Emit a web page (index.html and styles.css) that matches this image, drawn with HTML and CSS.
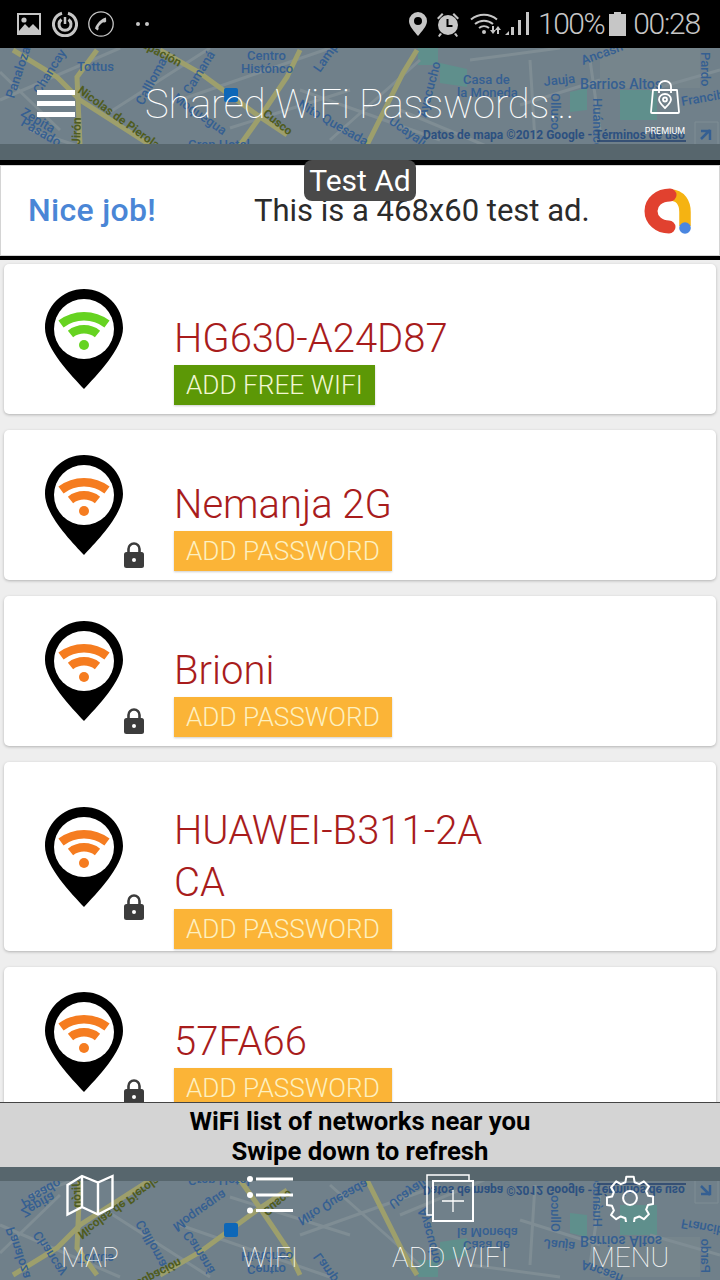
FILE: index.html
```html
<!DOCTYPE html>
<html lang="en">
<head>
<meta charset="utf-8">
<title>Shared WiFi Passwords</title>
<link rel="stylesheet" href="styles.css">
</head>
<body>
<svg class="defs" width="0" height="0" aria-hidden="true">
  <defs>
    <g id="pin-shape">
      <path d="M39 0C17.500 0 0 17.500 0 39C0 60 27 87 39 100C51 87 78 60 78 39C78 17.500 60.500 0 39 0z" fill="#000"/>
      <circle cx="39" cy="40" r="30" fill="#fff"/>
    </g>
    <g id="wifi-arcs" fill="none" stroke-width="8.500">
      <path d="M16 35A38 38 0 0 1 62 35"/>
      <path d="M25.500 45A22 22 0 0 1 52.500 45"/>
    </g>
    <symbol id="lock" viewBox="0 0 20 26">
      <path d="M4.500 11V7a5.500 5.500 0 0 1 11 0v4" fill="none" stroke="#3c3c3c" stroke-width="2.600"/>
      <rect x="0" y="10" width="20" height="16" rx="2.500" fill="#3c3c3c"/>
      <circle cx="10" cy="18" r="2" fill="#fff"/>
    </symbol>
  </defs>
</svg>

<div class="status">
  <div class="status-group">
    <svg class="s-icon" width="24" height="22" viewBox="0 0 24 22"><path fill-rule="evenodd" d="M0 0h24v22H0zM2 2v16l6-7 4 4 4-4 6 6V2z"/><circle cx="7" cy="7" r="2.600"/></svg>
    <svg class="s-icon s-gap" width="26" height="26" viewBox="0 0 26 26"><g fill="none" stroke-width="3"><path d="M16 2.200A11.500 11.500 0 1 1 10 2.200"/><path d="M9.500 8.500a6 6 0 1 0 7 0"/><path d="M13 6v7" stroke-width="2.500"/></g></svg>
    <svg class="s-icon s-gap2" width="26" height="26" viewBox="0 0 26 26"><circle cx="13" cy="13" r="12.200" fill="none" stroke-width="1.300"/><path d="M18 6.500c-4 .5-9.500 6-11 11l2.500 2c1.200-.8 1.300-2 .9-3.200 1-2 2.800-4 4.800-5 1.200.5 2.300.2 3-.8z"/></svg>
    <svg class="s-dots" width="16" height="6" viewBox="0 0 16 6"><circle cx="3" cy="3" r="2"/><circle cx="12" cy="3" r="2"/></svg>
  </div>
  <div class="status-group">
    <svg class="s-icon" width="18" height="24" viewBox="0 0 18 24"><path fill-rule="evenodd" d="M9 0a9 9 0 0 0-9 9c0 5 5 10 9 15 4-5 9-10 9-15a9 9 0 0 0-9-9zm0 5a4 4 0 1 1 0 8 4 4 0 0 1 0-8z"/></svg>
    <svg class="s-icon s-gap-alarm" width="24" height="26" viewBox="0 0 24 26"><circle cx="12" cy="14" r="10"/><path d="M1 7l5-5 1.500 1.500-5 5zM23 7l-5-5-1.500 1.500 5 5zM4 22l-2 3 1.500 1 2.500-3zM20 22l2 3-1.500 1-2.500-3z"/><path d="M11.500 8v7h5" fill="none" stroke="#000" stroke-width="2"/></svg>
    <svg class="s-icon s-gap-wifi" width="32" height="24" viewBox="0 0 32 24"><g fill="none" stroke-width="2"><path d="M1 7.500a20 20 0 0 1 26 0"/><path d="M5 12a14 14 0 0 1 18 0"/><path d="M9 16a8 8 0 0 1 10 0"/></g><circle cx="14" cy="20" r="2"/><path d="M21 16h2v4h2l-3 4-3-4h2zM28 24h-2v-4h-2l3-4 3 4h-2z" transform="translate(1 -2)"/></svg>
    <svg class="s-icon s-gap-signal" width="26" height="24" viewBox="0 0 26 24"><path d="M0 23l4-4v4zM6 23v-8h3v8zM13 23V8h3v15zM21 23V0h3v23z"/></svg>
    <span class="s-text s-pct">100%</span>
    <svg class="s-icon s-gap-bat" width="17" height="24" viewBox="0 0 17 24"><path d="M5 0h7v2h5v22H0V2h5z"/></svg>
    <span class="s-text s-time">00:28</span>
  </div>
</div>

<header class="header">
  <svg class="map" viewBox="0 48 720 112" preserveAspectRatio="none" aria-hidden="true">
    <g id="map">
      <rect x="0" y="40" width="720" height="130" fill="#70808a"/>
      <g class="m-green">
        <rect x="418" y="48" width="20" height="17"/><path d="M440 63l27 6v18l-27-4z"/>
        <rect x="620" y="90" width="37" height="30"/><path d="M570 92l17-4v22l-17 2z"/>
        <rect x="600" y="48" width="100" height="40" class="m-grey"/>
      </g>
      <g class="m-road">
        <path d="M0 100L120 48M110 112L210 48M30 130L120 160M180 100L330 48M230 128L350 90M330 140L420 60M400 110L520 160M470 60L560 48M520 105L600 80M530 60L535 140M590 60L600 130M650 90L720 70M300 90L440 140M0 72L60 130"/>
      </g>
      <g class="m-yellow">
        <path d="M13 50L57 77L80 100L150 145"/><path d="M97 50L77 77L80 145"/>
        <path d="M160 50L200 73L260 117L287 135"/><path d="M300 50L287 77L260 117L240 145"/>
        <path d="M417 50L403 73L367 145"/>
      </g>
      <g class="m-t">
        <text x="247" y="60">Centro</text>
        <text x="241" y="73">Histónco</text>
        <text x="77" y="71">Tottus</text>
        <text x="463" y="84">Casa de</text>
        <text x="457" y="97">la Moneda</text>
        <text x="544" y="86" transform="rotate(-6 544 86)">Jauja</text>
        <text x="580" y="89" class="m-lg">Barrios Altos</text>
        <text x="583" y="65" transform="rotate(-20 583 65)">Ancash</text>
        <text x="188" y="149">Gran Hotel</text>
        <text x="14" y="99" transform="rotate(-72 14 99)">Panaloza</text>
        <text x="40" y="95" transform="rotate(-58 40 95)">Chancay</text>
        <text x="190" y="95" transform="rotate(-58 190 95)">Camaná</text>
        <text x="143" y="106" transform="rotate(-62 143 106)">Callloma</text>
        <text x="172" y="100" transform="rotate(35 172 100)">Moquegua</text>
        <text x="297" y="107" transform="rotate(30 297 107)">Nito Quesada</text>
        <text x="20" y="115" transform="rotate(30 20 115)">Zepita</text>
        <text x="20" y="125" transform="rotate(30 20 125)">Pasado</text>
        <text x="426" y="118" transform="rotate(-75 426 118)">Ayacucho</text>
        <text x="388" y="123" transform="rotate(35 388 123)">Ucayali</text>
        <text x="551" y="93" transform="rotate(90 551 93)">Olluco</text>
        <text x="593" y="98" transform="rotate(90 593 98)">Huánuco</text>
        <text x="701" y="52" transform="rotate(90 701 52)">Pardo</text>
        <text x="682" y="106" transform="rotate(-10 682 106)">Francibia</text>
        <text x="320" y="73" transform="rotate(-55 320 73)">Lampa</text>
        <text x="423" y="139" class="m-credit">Datos de mapa ©2012 Google - Términos de uso</text>
      </g>
      <path d="M597 141H686" class="m-line"/>
      <path d="M695 122h23v25h-23z" class="m-box"/>
      <path d="M701 139l9-9M701 131h9v9" class="m-arrow"/>
      <g class="m-olive">
        <text x="128" y="40" transform="rotate(28 128 40)">Ocupación</text>
        <text x="77" y="92" transform="rotate(36 77 92)">Nicolas de Pierola</text>
        <text x="262" y="115" transform="rotate(38 262 115)">Cusco</text>
        <text x="80" y="145" transform="rotate(-88 80 145)">Jirón</text>
      </g>
      <rect x="224" y="88" width="14" height="14" rx="2" fill="#0d67b8"/>
      <rect x="0" y="144" width="720" height="24" fill="#57666d"/>
    </g>
  </svg>
  <div class="burger"><span></span><span></span><span></span></div>
  <h1 class="title">Shared WiFi Passwords...</h1>
  <div class="premium">
    <svg width="30" height="34" viewBox="0 0 30 34"><g fill="none" stroke="#fff" stroke-width="1.800"><path d="M3 10h24l2 22a1 1 0 0 1-1 1H2a1 1 0 0 1-1-1z" stroke-linejoin="round"/><path d="M9 13V6a6 5 0 0 1 12 0v7"/><path d="M15 14c-3.500 0-6 2.500-6 5.500s3 5.500 6 8.500c3-3 6-5.500 6-8.500S18.500 14 15 14z"/><circle cx="15" cy="19.500" r="2"/></g></svg>
    <span class="premium-label">PREMIUM</span>
  </div>
</header>

<section class="ad">
  <div class="ad-inner">
    <span class="ad-nice">Nice job!</span>
    <span class="ad-text">This is a 468x60 test ad.</span>
    <svg class="ad-logo" width="48" height="46" viewBox="0 0 48 46" fill="none"><path d="M26 7C37 7 41 16 41 24V38" stroke="#f5b312" stroke-width="11.500"/><path d="M26 7C15 7 7 14 7 23S15 39 25 39" stroke="#e1412f" stroke-width="13" stroke-linecap="round"/><circle cx="41" cy="40" r="5.800" fill="#4a86e0"/></svg>
  </div>
  <span class="ad-badge">Test Ad</span>
</section>

<main class="list">
  <article class="card">
    <div class="pin">
      <svg width="78" height="100" viewBox="0 0 78 100"><use href="#pin-shape"/><use href="#wifi-arcs" class="wifi-green"/><circle cx="39" cy="56" r="5" class="dot-green"/></svg>
    </div>
    <div class="info">
      <div class="name">HG630-A24D87</div>
      <div class="btn btn-green">ADD FREE WIFI</div>
    </div>
  </article>
  <article class="card">
    <div class="pin">
      <svg width="78" height="100" viewBox="0 0 78 100"><use href="#pin-shape"/><use href="#wifi-arcs" class="wifi-orange"/><circle cx="39" cy="56" r="5" class="dot-orange"/></svg>
      <svg class="lock" width="20" height="26"><use href="#lock"/></svg>
    </div>
    <div class="info">
      <div class="name">Nemanja 2G</div>
      <div class="btn btn-yellow">ADD PASSWORD</div>
    </div>
  </article>
  <article class="card">
    <div class="pin">
      <svg width="78" height="100" viewBox="0 0 78 100"><use href="#pin-shape"/><use href="#wifi-arcs" class="wifi-orange"/><circle cx="39" cy="56" r="5" class="dot-orange"/></svg>
      <svg class="lock" width="20" height="26"><use href="#lock"/></svg>
    </div>
    <div class="info">
      <div class="name">Brioni</div>
      <div class="btn btn-yellow">ADD PASSWORD</div>
    </div>
  </article>
  <article class="card">
    <div class="pin">
      <svg width="78" height="100" viewBox="0 0 78 100"><use href="#pin-shape"/><use href="#wifi-arcs" class="wifi-orange"/><circle cx="39" cy="56" r="5" class="dot-orange"/></svg>
      <svg class="lock" width="20" height="26"><use href="#lock"/></svg>
    </div>
    <div class="info">
      <div class="name">HUAWEI-B311-2ACA</div>
      <div class="btn btn-yellow">ADD PASSWORD</div>
    </div>
  </article>
  <article class="card">
    <div class="pin">
      <svg width="78" height="100" viewBox="0 0 78 100"><use href="#pin-shape"/><use href="#wifi-arcs" class="wifi-orange"/><circle cx="39" cy="56" r="5" class="dot-orange"/></svg>
      <svg class="lock" width="20" height="26"><use href="#lock"/></svg>
    </div>
    <div class="info">
      <div class="name">57FA66</div>
      <div class="btn btn-yellow">ADD PASSWORD</div>
    </div>
  </article>
</main>

<div class="toast">WiFi list of networks near you<br>Swipe down to refresh</div>

<nav class="nav">
  <svg class="map" viewBox="0 0 720 113" preserveAspectRatio="none" aria-hidden="true"><use href="#map" transform="matrix(1 0 0 -1 0 158)"/></svg>
  <div class="nav-item">
    <svg width="48" height="48" viewBox="0 0 48 48" fill="none" stroke="#fff" stroke-width="2.400"><path d="M1.500 11L16 2l16 6.500L46.500 2v31L32 40.500 16 33 1.500 40.500zM16 2v31M32 8.500v32"/></svg>
    <span class="nav-label">MAP</span>
  </div>
  <div class="nav-item">
    <svg width="48" height="48" viewBox="0 0 48 48" fill="#fff"><circle cx="4" cy="5" r="3"/><circle cx="4" cy="21" r="3"/><circle cx="4" cy="36.500" r="3"/><rect x="10" y="3.500" width="37" height="3"/><rect x="10" y="19.500" width="37" height="3"/><rect x="10" y="35" width="37" height="3"/></svg>
    <span class="nav-label">WIFI</span>
  </div>
  <div class="nav-item">
    <svg width="48" height="48" viewBox="0 0 48 48" fill="none" stroke="#fff" stroke-width="1.500"><path d="M7 41H1V1h42v6"/><rect x="7" y="7" width="40" height="40" stroke-width="2"/><path d="M16 27h22M27 16v22" stroke-width="1.300"/></svg>
    <span class="nav-label">ADD WIFI</span>
  </div>
  <div class="nav-item">
    <svg width="48" height="48" viewBox="-2 -2 52 52" fill="none" stroke="#fff" stroke-width="2.200"><path d="M20 1h8l1 6 5 2 5-3 5.500 5.500-3 5 2 5 5.500 1v8l-5.500 1-2 5 3 5-5.500 5.500-5-3-5 2-1 6h-8l-1-6-5-2-5 3L3.500 42.500l3-5-2-5-5.500-1v-8l5.500-1 2-5-3-5L9 6l5 3 5-2z" stroke-linejoin="round"/><circle cx="24" cy="24" r="7.500"/></svg>
    <span class="nav-label">MENU</span>
  </div>
</nav>
</body>
</html>
```
FILE: styles.css
```css
* { box-sizing: border-box; }
html, body { margin: 0; padding: 0; }
body {
  width: 720px;
  height: 1280px;
  display: flex;
  flex-direction: column;
  overflow: hidden;
  background: #eee;
  font-family: Roboto, "Liberation Sans", sans-serif;
}
.defs { position: absolute; }

.status {
  flex: 0 0 48px;
  background: #000;
  display: flex;
  justify-content: space-between;
  align-items: center;
  padding: 0 20px 0 17px;
  color: #c6c6c6;
}
.status-group { display: flex; align-items: center; }
.s-icon, .s-dots { fill: #c6c6c6; stroke: #c6c6c6; stroke-width: 0; }
.s-icon g { stroke: #c6c6c6; }
.s-gap { margin-left: 11px; }
.s-gap2 { margin-left: 10px; }
.s-dots { margin-left: 21px; }
.s-gap-alarm { margin-left: 9px; }
.s-gap-wifi { margin-left: 10px; }
.s-gap-signal { margin-left: 3px; }
.s-gap-bat { margin-left: 5px; }
.s-text { font-weight: 300; font-size: 30px; line-height: 48px; }
.s-pct { margin-left: 7px; letter-spacing: -1.500px; }
.s-time { margin-left: 7px; letter-spacing: -1.200px; }

.header {
  flex: 0 0 112px;
  position: relative;
  display: flex;
  align-items: center;
  color: #fff;
  overflow: hidden;
}
.map { position: absolute; inset: 0; width: 100%; height: 100%; }
.m-green path, .m-green rect { fill: #5f8f8c; }
.m-green .m-grey { fill: #76858c; }
.m-road path { fill: none; stroke: #7f8d94; stroke-width: 3; }
.m-yellow path { fill: none; stroke: #9d9f6c; stroke-width: 5; }
.m-t text { font: 500 13px Roboto, sans-serif; fill: #355f92; }
.m-t .m-lg { font-size: 14.200px; }
.m-t .m-credit { font-size: 12px; font-weight: 700; fill: #2c5080; }
.m-olive text { font: 700 12px Roboto, sans-serif; fill: #4f5c1e; }
.m-line { stroke: #23406c; stroke-width: 1.500; }
.m-box { fill: none; stroke: #7f8d94; stroke-width: 1; }
.m-arrow { fill: none; stroke: #355f92; stroke-width: 2.500; }

.burger {
  position: relative;
  margin-left: 37px;
  margin-top: -2px;
  width: 38px;
  display: flex;
  flex-direction: column;
  gap: 6px;
}
.burger span { display: block; height: 5px; background: #fff; }
.title {
  position: relative;
  margin: 1px 0 0 70px;
  font-weight: 100;
  font-size: 40px;
  letter-spacing: -.2px;
  line-height: 48px;
  white-space: nowrap;
  width: 435px;
}
.premium {
  position: relative;
  width: 40px;
  margin: -3px 0 0 65px;
  display: flex;
  flex-direction: column;
  align-items: center;
  gap: 11px;
  padding-top: 12px;
}
.premium-label { font-size: 9px; line-height: 12px; white-space: nowrap; }

.ad {
  flex: 0 0 100px;
  position: relative;
  background: #000;
  padding: 5px 0 4px;
}
.ad-inner {
  height: 91px;
  background: #fff;
  border: 1px solid #d4d4d4;
  display: flex;
  align-items: center;
  padding: 0 27px;
}
.ad-nice { font-weight: 500; font-size: 32px; letter-spacing: .3px; color: #4a86d6; width: 226px; margin-top: -2px; }
.ad-text { font-size: 31px; color: #2b2b2b; white-space: nowrap; width: 390px; }
.ad-logo { flex: none; }
.ad-badge {
  position: absolute;
  left: 304px;
  top: 0;
  width: 112px;
  height: 41px;
  background: #494949;
  color: #fff;
  font-size: 30px;
  line-height: 42px;
  text-align: center;
  border-radius: 8px;
}

.list {
  flex: 1 1 0;
  min-height: 0;
  overflow: hidden;
  padding: 4px 4px 0;
  display: flex;
  flex-direction: column;
  gap: 16px;
}
.card {
  flex: none;
  min-height: 150px;
  display: flex;
  background: #fff;
  border-radius: 5px;
  box-shadow: 0 1px 3px rgba(0,0,0,.25);
  padding-left: 41px;
}
.pin {
  flex: none;
  align-self: center;
  position: relative;
  width: 78px;
  height: 100px;
  margin-right: 51px;
}
.pin > svg { display: block; }
.pin > svg.lock { position: absolute; left: 79px; top: 87px; }
.wifi-green { stroke: #66d321; }
.dot-green { fill: #66d321; }
.wifi-orange { stroke: #f57c20; }
.dot-orange { fill: #f57c20; }
.info {
  align-self: center;
  padding: 42.500px 0 2.500px;
  display: flex;
  flex-direction: column;
  align-items: flex-start;
}
.name {
  font-weight: 300;
  font-size: 40px;
  line-height: 52px;
  color: #a81c1c;
  width: 322px;
  word-break: break-all;
}
.btn {
  height: 40px;
  padding: 0 12px;
  font-weight: 300;
  font-size: 26.200px;
  line-height: 41px;
  white-space: nowrap;
  box-shadow: 0 1px 2px rgba(0,0,0,.2);
}
.btn-green { background: #5c9806; color: #f2f7d2; }
.btn-yellow { background: #fbb437; color: #fdf0c0; }

.toast {
  flex: 0 0 65px;
  background: #d4d4d4;
  border-top: 1px solid #444;
  font-weight: 700;
  font-size: 25.700px;
  line-height: 30px;
  color: #000;
  text-align: center;
  padding-top: 3px;
}

.nav {
  flex: 0 0 113px;
  position: relative;
  display: grid;
  grid-template-columns: repeat(4, 180px);
  color: #fff;
  overflow: hidden;
}
.nav-item {
  position: relative;
  display: flex;
  flex-direction: column;
  align-items: center;
  padding-top: 7px;
  height: 113px;
}
.nav-item svg { display: block; height: 48px; }
.nav-label {
  position: absolute;
  top: 73px;
  font-weight: 100;
  font-size: 28px;
  line-height: 36px;
  white-space: nowrap;
}
```
